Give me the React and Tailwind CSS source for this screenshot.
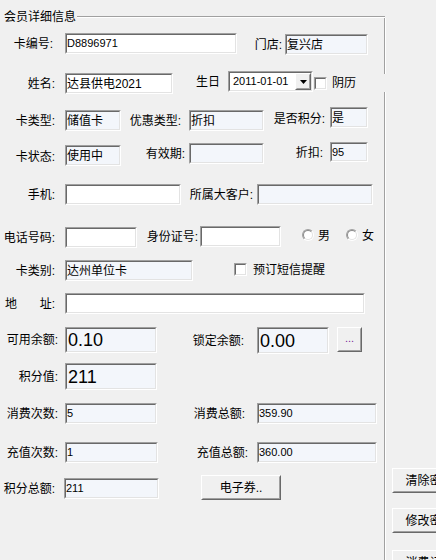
const RO = 'bg-[#f3f6fb]';

const Sunken = ({ className = '', bg = 'bg-white', children }) => (
  <div className={`shrink-0 border border-t-[#a0a0a0] border-l-[#a0a0a0] border-r-white border-b-white ${className}`}>
    <div className={`h-full flex items-center overflow-hidden border border-t-[#696969] border-l-[#696969] border-r-[#e3e3e3] border-b-[#e3e3e3] ${bg}`}>
      {children}
    </div>
  </div>
);

const Raised = ({ className = '', children }) => (
  <div className={`shrink-0 border border-t-white border-l-white border-r-[#696969] border-b-[#696969] ${className}`}>
    <div className="h-full flex items-center justify-center border border-t-[#f0f0f0] border-l-[#f0f0f0] border-r-[#a0a0a0] border-b-[#a0a0a0] bg-[#f0f0f0]">
      {children}
    </div>
  </div>
);

const Label = ({ className = '', children }) => (
  <div className={`shrink-0 flex items-center justify-end whitespace-nowrap text-[12px] leading-none ${className}`}>
    {children}
  </div>
);

const Check = ({ className = '' }) => (
  <div className={`shrink-0 w-[13px] h-[13px] border border-t-[#a0a0a0] border-l-[#a0a0a0] border-r-white border-b-white ${className}`}>
    <div className="h-full bg-white border border-t-[#696969] border-l-[#696969] border-r-[#e3e3e3] border-b-[#e3e3e3]" />
  </div>
);

const Radio = ({ className = '' }) => (
  <div className={`shrink-0 w-[12px] h-[12px] rounded-full border border-t-[#a0a0a0] border-l-[#a0a0a0] border-r-white border-b-white ${className}`}>
    <div className="h-full rounded-full bg-white border border-t-[#8a8a8a] border-l-[#8a8a8a] border-r-[#e3e3e3] border-b-[#e3e3e3]" />
  </div>
);

const num = 'text-[11px] leading-none whitespace-nowrap';
const cjk = 'text-[12px] leading-none whitespace-nowrap';
const big = 'text-[18px] leading-none whitespace-nowrap pl-[1px]';

export default function App() {
  return (
    <div className="w-[436px] h-[560px] overflow-hidden bg-[#f0f0f0] text-black flex font-['Liberation_Sans','Noto_Sans_CJK_SC',sans-serif]">
      {/* 会员详细信息 group */}
      <div className="w-[385px] shrink-0 flex flex-col">
        <div className="h-[18px] shrink-0 flex items-start">
          <span className="mt-[11px] pl-[4px] pr-[1px] text-[12px] leading-[12px] whitespace-nowrap">会员详细信息</span>
          <div className="flex-1 mt-[16px] h-[2px] border-t border-t-[#a0a0a0] bg-white" />
        </div>

        <div className="flex-1 flex flex-col pt-[15px] border-r border-r-[#a0a0a0] shadow-[1px_0_0_#fff]">
          {/* 卡编号 / 门店 */}
          <div className="flex items-start h-[38px] shrink-0">
            <Label className="w-[53px] h-[21px]">卡编号:</Label>
            <Sunken className="ml-[12px] w-[172px] h-[21px]">
              <span className={num}>D8896971</span>
            </Sunken>
            <Label className="w-[45px] h-[21px] mt-[1px]">门店:</Label>
            <Sunken className="ml-[3px] mt-[1px] w-[83px] h-[21px]" bg={RO}>
              <span className={cjk}>复兴店</span>
            </Sunken>
          </div>

          {/* 姓名 / 生日 / 阴历 */}
          <div className="flex items-start h-[36px] shrink-0">
            <Label className="w-[55px] h-[21px] mt-[2px]">姓名:</Label>
            <Sunken className="ml-[10px] mt-[2px] w-[108px] h-[21px]">
              <span className={cjk}>达县供电2021</span>
            </Sunken>
            <Label className="w-[47px] h-[21px]">生日</Label>
            <Sunken className="ml-[8px] w-[85px] h-[21px]">
              <span className={`${num} pl-[3px]`}>2011-01-01</span>
              <Raised className="ml-auto w-[16px] h-full">
                <svg width="7" height="4" viewBox="0 0 7 4">
                  <polygon points="0,0 7,0 3.5,4" fill="#000" />
                </svg>
              </Raised>
            </Sunken>
            <div className="shrink-0 mt-[3px] h-[18px] w-[74px] bg-[#f0f0f0] flex items-center pl-[1px]">
              <Check />
              <span className={`${cjk} ml-[5px]`}>阴历</span>
            </div>
          </div>

          {/* 卡类型 / 优惠类型 / 是否积分 */}
          <div className="flex items-start h-[35px] shrink-0">
            <Label className="w-[55px] h-[21px] mt-[3px]">卡类型:</Label>
            <Sunken className="ml-[10px] mt-[3px] w-[56px] h-[21px]" bg={RO}>
              <span className={cjk}>储值卡</span>
            </Sunken>
            <Label className="w-[60px] h-[21px] mt-[3px]">优惠类型:</Label>
            <Sunken className="ml-[8px] mt-[3px] w-[75px] h-[21px]" bg={RO}>
              <span className={cjk}>折扣</span>
            </Sunken>
            <Label className="w-[61px] h-[21px] mt-[1px]">是否积分:</Label>
            <Sunken className="ml-[5px] w-[38px] h-[21px]" bg={RO}>
              <span className={cjk}>是</span>
            </Sunken>
          </div>

          {/* 卡状态 / 有效期 / 折扣 */}
          <div className="flex items-start h-[42px] shrink-0">
            <Label className="w-[55px] h-[21px] mt-[4px]">卡状态:</Label>
            <Sunken className="ml-[10px] mt-[3px] w-[56px] h-[21px]" bg={RO}>
              <span className={cjk}>使用中</span>
            </Sunken>
            <Label className="w-[64px] h-[21px] mt-[1px]">有效期:</Label>
            <Sunken className="ml-[4px] mt-[1px] w-[75px] h-[21px]" bg={RO} />
            <Label className="w-[59px] h-[21px]">折扣:</Label>
            <Sunken className="ml-[7px] w-[38px] h-[20px]" bg={RO}>
              <span className={num}>95</span>
            </Sunken>
          </div>

          {/* 手机 / 所属大客户 */}
          <div className="flex items-start h-[42px] shrink-0">
            <Label className="w-[55px] h-[21px]">手机:</Label>
            <Sunken className="ml-[10px] w-[116px] h-[21px]" />
            <Label className="w-[72px] h-[21px]">所属大客户:</Label>
            <Sunken className="ml-[4px] w-[116px] h-[21px]" bg={RO} />
          </div>

          {/* 电话号码 / 身份证号 / 性别 */}
          <div className="flex items-start h-[34px] shrink-0">
            <Label className="w-[55px] h-[21px] mt-[1px]">电话号码:</Label>
            <Sunken className="ml-[10px] mt-[1px] w-[72px] h-[21px]" />
            <Label className="w-[61px] h-[21px]">身份证号:</Label>
            <Sunken className="ml-[2px] w-[81px] h-[21px]" />
            <Radio className="ml-[21px] mt-[3px]" />
            <Label className="ml-[4px] h-[21px] mt-[-1px]">男</Label>
            <Radio className="ml-[16px] mt-[3px]" />
            <Label className="ml-[4px] h-[21px] mt-[-1px]">女</Label>
          </div>

          {/* 卡类别 / 预订短信提醒 */}
          <div className="flex items-start h-[33px] shrink-0">
            <Label className="w-[55px] h-[21px]">卡类别:</Label>
            <Sunken className="ml-[10px] w-[128px] h-[21px]" bg={RO}>
              <span className={cjk}>达州单位卡</span>
            </Sunken>
            <Check className="ml-[41px] mt-[3px]" />
            <Label className="ml-[6px] h-[20px]">预订短信提醒</Label>
          </div>

          {/* 地址 */}
          <div className="flex items-start h-[34px] shrink-0">
            <div className="shrink-0 w-[55px] h-[21px] pl-[5px] flex items-center justify-between text-[12px] leading-none whitespace-nowrap">
              <span>地</span>
              <span>址:</span>
            </div>
            <Sunken className="ml-[10px] w-[300px] h-[21px]" />
          </div>

          {/* 可用余额 / 锁定余额 */}
          <div className="flex items-start h-[36px] shrink-0">
            <Label className="w-[58px] h-[26px]">可用余额:</Label>
            <Sunken className="ml-[7px] w-[92px] h-[26px]" bg={RO}>
              <span className={big}>0.10</span>
            </Sunken>
            <Label className="w-[87px] h-[27px]">锁定余额:</Label>
            <Sunken className="ml-[13px] w-[72px] h-[27px]" bg={RO}>
              <span className={big}>0.00</span>
            </Sunken>
            <Raised className="ml-[8px] w-[25px] h-[25px]">
              <span className="text-[11px] leading-none text-[#7a2a9a] -mt-[3px]">...</span>
            </Raised>
          </div>

          {/* 积分值 */}
          <div className="flex items-start h-[40px] shrink-0">
            <Label className="w-[58px] h-[27px]">积分值:</Label>
            <Sunken className="ml-[7px] w-[92px] h-[27px]" bg={RO}>
              <span className={big}>211</span>
            </Sunken>
          </div>

          {/* 消费次数 / 消费总额 */}
          <div className="flex items-start h-[39px] shrink-0">
            <Label className="w-[58px] h-[21px]">消费次数:</Label>
            <Sunken className="ml-[7px] w-[92px] h-[21px]" bg={RO}>
              <span className={num}>5</span>
            </Sunken>
            <Label className="w-[88px] h-[21px]">消费总额:</Label>
            <Sunken className="ml-[12px] w-[120px] h-[21px]" bg={RO}>
              <span className={num}>359.90</span>
            </Sunken>
          </div>

          {/* 充值次数 / 充值总额 */}
          <div className="flex items-start h-[33px] shrink-0">
            <Label className="w-[58px] h-[21px]">充值次数:</Label>
            <Sunken className="ml-[7px] w-[93px] h-[21px]" bg={RO}>
              <span className={num}>1</span>
            </Sunken>
            <Label className="w-[90px] h-[21px]">充值总额:</Label>
            <Sunken className="ml-[9px] w-[120px] h-[21px]" bg={RO}>
              <span className={num}>360.00</span>
            </Sunken>
          </div>

          {/* 积分总额 / 电子券 */}
          <div className="flex items-start h-[30px] shrink-0">
            <Label className="w-[55px] h-[21px] mt-[3px]">积分总额:</Label>
            <Sunken className="ml-[9px] mt-[3px] w-[95px] h-[21px]" bg={RO}>
              <span className={num}>211</span>
            </Sunken>
            <Raised className="ml-[42px] w-[80px] h-[25px]">
              <span className={cjk}>电子券..</span>
            </Raised>
          </div>
        </div>
      </div>

      {/* right side buttons */}
      <div className="shrink-0 ml-[7px] flex flex-col">
        <Raised className="mt-[468px] w-[75px] h-[25px]">
          <span className={cjk}>清除密码</span>
        </Raised>
        <Raised className="mt-[15px] w-[75px] h-[25px]">
          <span className={cjk}>修改密码</span>
        </Raised>
        <Raised className="mt-[17px] w-[75px] h-[25px]">
          <span className={cjk}>消费记录</span>
        </Raised>
      </div>
    </div>
  );
}
